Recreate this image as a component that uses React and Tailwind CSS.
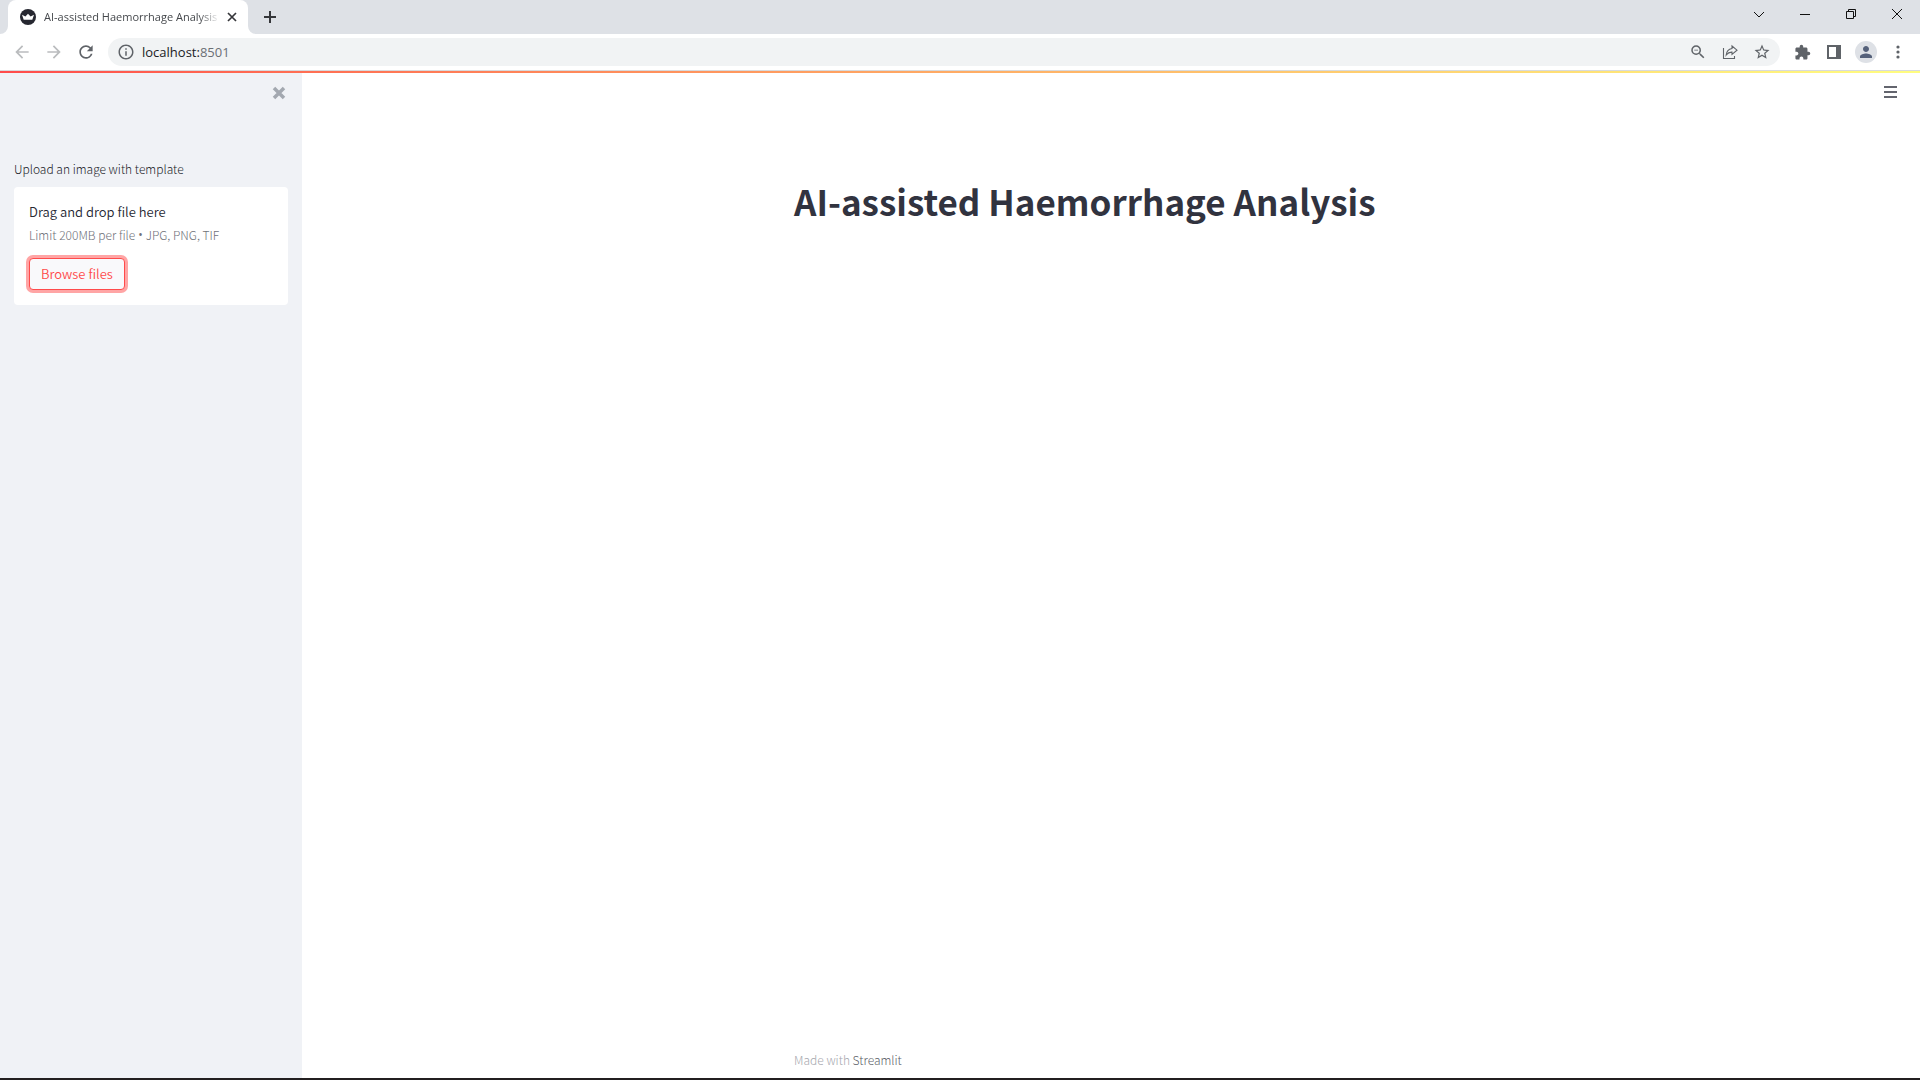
import React from "react";
import {
  MdArrowBack,
  MdArrowForward,
  MdRefresh,
  MdInfoOutline,
  MdOutlineZoomOut,
  MdStarBorder,
  MdExtension,
  MdPerson,
} from "react-icons/md";

function Favicon() {
  return (
    <svg className="h-4 w-4 shrink-0" viewBox="0 0 16 16" aria-hidden="true">
      <circle cx="8" cy="8" r="8" fill="#262730" />
      <path d="M2 5.8 5.4 7.5 8 4.8 10.6 7.5 14 5.8 12.3 10.8H3.7Z" fill="#fff" />
    </svg>
  );
}

function TabStrip() {
  return (
    <div className="flex h-[34px] items-stretch bg-[#dee1e6]">
      <div className="relative ml-2 flex w-60 shrink-0 items-center rounded-t-lg bg-white pl-3 pr-2">
        <svg className="absolute bottom-0 -left-2 h-2 w-2" viewBox="0 0 8 8" aria-hidden="true">
          <path d="M8 0V8H0A8 8 0 0 0 8 0Z" fill="#fff" />
        </svg>
        <svg className="absolute bottom-0 -right-2 h-2 w-2" viewBox="0 0 8 8" aria-hidden="true">
          <path d="M0 0V8H8A8 8 0 0 1 0 0Z" fill="#fff" />
        </svg>
        <Favicon />
        <span className="ml-2 min-w-0 flex-1 overflow-hidden whitespace-nowrap text-[11px] text-[#45484c] [mask-image:linear-gradient(to_right,black_88%,transparent)]">
          AI-assisted Haemorrhage Analysis
        </span>
        <button type="button" aria-label="Close tab" className="ml-1 flex h-4 w-4 items-center justify-center">
          <svg className="h-4 w-4" viewBox="0 0 16 16" stroke="#35363a" strokeWidth="1.7" aria-hidden="true">
            <path d="M4 4 12 12M12 4 4 12" />
          </svg>
        </button>
      </div>
      <button type="button" aria-label="New tab" className="ml-3 flex w-5 items-center justify-center">
        <svg className="h-4 w-4" viewBox="0 0 16 16" stroke="#35363a" strokeWidth="2" aria-hidden="true">
          <path d="M8 2V14M2 8H14" />
        </svg>
      </button>
      <div className="ml-auto flex h-7 items-center">
        {[
          ["Search tabs", "M3 6 8 11 13 6"],
          ["Minimize", "M3 8.5H13"],
          ["Restore", "M3.5 5.5H10.5V12.5H3.5ZM5.5 5.5V3.5H12.5V10.5H10.5"],
          ["Close window", "M3 3 13 13M13 3 3 13"],
        ].map(([name, d]) => (
          <button key={name} type="button" aria-label={name} className="flex w-[46px] items-center justify-center">
            <svg className="h-4 w-4" viewBox="0 0 16 16" fill="none" stroke="#111" strokeWidth="1" aria-hidden="true">
              <path d={d} />
            </svg>
          </button>
        ))}
      </div>
    </div>
  );
}

function Toolbar() {
  return (
    <div className="flex h-[37px] items-center border-b border-[#d8dadd] bg-white pl-3 pr-1.5">
      <button type="button" aria-label="Back" className="flex w-5 justify-center text-[#babcbe]">
        <MdArrowBack size={20} />
      </button>
      <button type="button" aria-label="Forward" className="ml-3 flex w-5 justify-center text-[#babcbe]">
        <MdArrowForward size={20} />
      </button>
      <button type="button" aria-label="Reload" className="ml-3 flex w-5 justify-center text-[#5f6368]">
        <MdRefresh size={20} />
      </button>
      <div className="ml-3 flex h-7 flex-1 items-center rounded-full bg-[#f1f3f4] pl-[9px] pr-0.5 text-[#5f6368]">
        <button type="button" aria-label="View site information">
          <MdInfoOutline size={18} />
        </button>
        <div className="ml-[7px] flex-1 pt-px text-[13px] text-[#6b6f74]">
          <span className="text-[#202124]">localhost:</span>8501
        </div>
        <button type="button" aria-label="Zoom" className="flex w-8 justify-center">
          <MdOutlineZoomOut size={18} />
        </button>
        <button type="button" aria-label="Share this page" className="flex w-8 justify-center">
          <svg className="h-4 w-4" viewBox="0 0 16 16" fill="none" stroke="#5f6368" strokeWidth="1.1" aria-hidden="true">
            <path d="M1.5 4V14.5H12.5V12" />
            <path d="M10 2 15 6.2 10 10.4V8.1Q6.5 7.9 4.2 11 4.7 5.4 10 4.5Z" />
          </svg>
        </button>
        <button type="button" aria-label="Bookmark this tab" className="flex w-8 justify-center">
          <MdStarBorder size={18} />
        </button>
      </div>
      <button type="button" aria-label="Extensions" className="ml-1.5 flex w-8 justify-center text-[#5f6368]">
        <MdExtension size={17} />
      </button>
      <button type="button" aria-label="Side panel" className="flex w-8 justify-center">
        <svg className="h-[14px] w-[14px]" viewBox="0 0 14 14" aria-hidden="true">
          <path d="M0 0H14V14H0ZM2 2V12H9V2Z" fill="#5f6368" fillRule="evenodd" />
        </svg>
      </button>
      <button type="button" aria-label="Profile" className="flex w-8 justify-center">
        <span className="flex h-[22px] w-[22px] items-center justify-center rounded-full bg-[#dee1e6] text-[#55617a]">
          <MdPerson size={18} />
        </span>
      </button>
      <button type="button" aria-label="Menu" className="flex w-8 justify-center">
        <svg className="h-4 w-4" viewBox="0 0 16 16" fill="#5f6368" aria-hidden="true">
          <circle cx="8" cy="3" r="1.6" />
          <circle cx="8" cy="8" r="1.6" />
          <circle cx="8" cy="13" r="1.6" />
        </svg>
      </button>
    </div>
  );
}

function Sidebar() {
  return (
    <aside className="w-[302px] shrink-0 bg-[#f0f2f6] px-3.5">
      <div className="flex justify-end pt-2.5">
        <button type="button" aria-label="Close sidebar" className="flex h-5 w-[18px] items-center justify-center">
          <svg className="h-4 w-4" viewBox="0 0 16 16" stroke="#a3a8b0" strokeWidth="3.5" aria-hidden="true">
            <path d="M3 3 13 13M13 3 3 13" />
          </svg>
        </button>
      </div>
      <label htmlFor="upload" className="mt-14 block text-xs leading-5 font-light text-[#1c1e2a]">
        Upload an image with template
      </label>
      <section className="mt-2 rounded bg-white p-[15px] text-[#262833]">
        <p className="text-[13px] leading-5 font-[350]">Drag and drop file here</p>
        <p className="mt-[3px] flex gap-[3px] text-xs leading-5 font-light text-[#6f7179]">
          <span>Limit 200MB per file</span>
          <span className="font-['Open_Sans'] font-normal">•</span>
          <span>JPG, PNG, TIF</span>
        </p>
        <button
          id="upload"
          type="button"
          className="mt-[13px] block h-8 rounded border border-[#ff4b4b] bg-[#f9f9fb] px-[11px] text-[13px] font-[350] text-[#ff4b4b] ring-3 ring-[#ffa5a5]"
        >
          Browse files
        </button>
      </section>
    </aside>
  );
}

export default function App() {
  return (
    <div className="flex min-h-screen flex-col border-b-2 border-[#231f20] bg-white font-['Open_Sans',sans-serif]">
      <header>
        <TabStrip />
        <Toolbar />
      </header>
      <div className="h-0.5 bg-linear-to-r from-[#ff4b4b] to-[#fffd80]" />
      <div className="flex flex-1 font-['Noto_Sans_CJK_SC',sans-serif]">
        <Sidebar />
        <div className="relative flex flex-1 flex-col">
          <button type="button" aria-label="Main menu" className="absolute top-[7px] right-5 flex h-6 w-5 items-center justify-center">
            <svg className="h-3 w-[13px]" viewBox="0 0 13 12" stroke="#31333f" strokeWidth="1.5" aria-hidden="true">
              <path d="M0 1H13M0 6H13M0 11H13" />
            </svg>
          </button>
          <main className="mx-auto w-full max-w-[634px] flex-1 pt-26">
            <h1 className="text-[35px] leading-12 font-bold whitespace-nowrap text-[#31333f]">
              AI-assisted Haemorrhage Analysis
            </h1>
          </main>
          <footer className="mx-auto w-full max-w-[634px] pb-2 text-xs leading-5 font-light text-[#a6a7ae]">
            Made with{" "}
            <a href="#streamlit" className="text-[#5d5f69]">
              Streamlit
            </a>
          </footer>
        </div>
      </div>
    </div>
  );
}
